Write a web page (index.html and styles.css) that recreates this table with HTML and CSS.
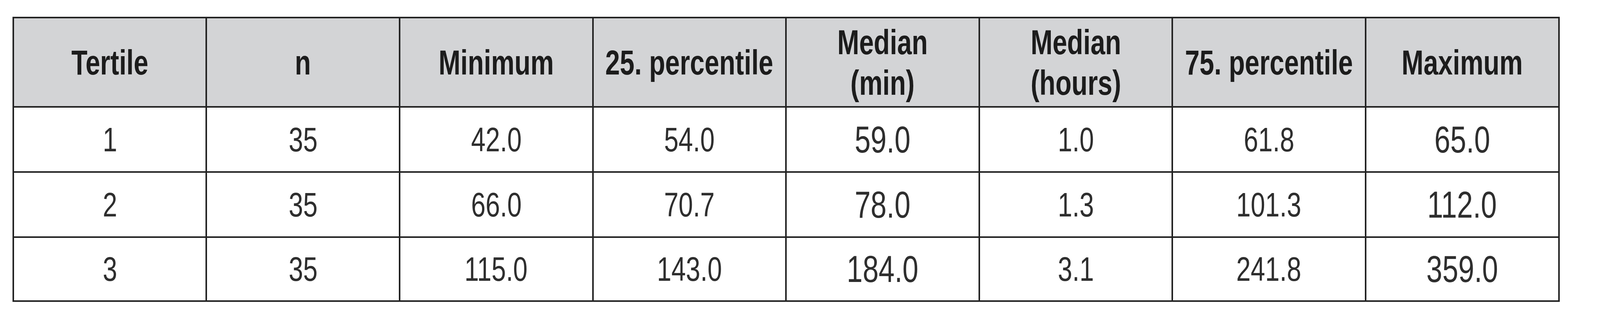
FILE: index.html
```html
<!DOCTYPE html>
<html>
<head>
<meta charset="utf-8">
<link rel="stylesheet" href="styles.css">
</head>
<body>
<div class="page">
<table class="stats">
<thead>
<tr class="head-row">
<th><div class="c"><span class="t">Tertile</span></div></th>
<th><div class="c"><span class="t">n</span></div></th>
<th><div class="c"><span class="t">Minimum</span></div></th>
<th><div class="c"><span class="t">25. percentile</span></div></th>
<th><div class="c"><span class="t">Median<br>(min)</span></div></th>
<th><div class="c"><span class="t">Median<br>(hours)</span></div></th>
<th><div class="c"><span class="t">75. percentile</span></div></th>
<th><div class="c"><span class="t">Maximum</span></div></th>
</tr>
</thead>
<tbody>
<tr class="row">
<td><div class="c"><span class="t">1</span></div></td>
<td><div class="c"><span class="t">35</span></div></td>
<td><div class="c"><span class="t">42.0</span></div></td>
<td><div class="c"><span class="t">54.0</span></div></td>
<td class="big"><div class="c"><span class="t">59.0</span></div></td>
<td><div class="c"><span class="t">1.0</span></div></td>
<td><div class="c"><span class="t">61.8</span></div></td>
<td class="big"><div class="c"><span class="t">65.0</span></div></td>
</tr>
<tr class="row">
<td><div class="c"><span class="t">2</span></div></td>
<td><div class="c"><span class="t">35</span></div></td>
<td><div class="c"><span class="t">66.0</span></div></td>
<td><div class="c"><span class="t">70.7</span></div></td>
<td class="big"><div class="c"><span class="t">78.0</span></div></td>
<td><div class="c"><span class="t">1.3</span></div></td>
<td><div class="c"><span class="t">101.3</span></div></td>
<td class="big"><div class="c"><span class="t">112.0</span></div></td>
</tr>
<tr class="row last">
<td><div class="c"><span class="t">3</span></div></td>
<td><div class="c"><span class="t">35</span></div></td>
<td><div class="c"><span class="t">115.0</span></div></td>
<td><div class="c"><span class="t">143.0</span></div></td>
<td class="big"><div class="c"><span class="t">184.0</span></div></td>
<td><div class="c"><span class="t">3.1</span></div></td>
<td><div class="c"><span class="t">241.8</span></div></td>
<td class="big"><div class="c"><span class="t">359.0</span></div></td>
</tr>
</tbody>
</table>
</div>
</body>
</html>
```
FILE: styles.css
```css
html, body {
  margin: 0;
  padding: 0;
  background: #ffffff;
}
.page {
  padding: 43px 0 0 0.775vw;
}
.stats {
  border-collapse: collapse;
  table-layout: fixed;
  width: 96.7vw;
  font-family: "Liberation Sans", Arial, sans-serif;
  border: 4px solid #222222;
}
.stats th,
.stats td {
  border: 4px solid #222222;
  text-align: center;
  vertical-align: middle;
  padding: 0;
  overflow: visible;
}
.c {
  display: flex;
  justify-content: center;
  align-items: center;
}
.t {
  display: inline-block;
  white-space: nowrap;
  text-align: center;
  flex: none;
}
.stats th {
  background: #d3d4d6;
  color: #1c1c1c;
  font-weight: bold;
  font-size: 89px;
  line-height: 104px;
}
.head-row {
  height: 229px;
}
.row {
  height: 167px;
}
.row.last {
  height: 164px;
}
.stats td {
  color: #2e2e2e;
  font-size: 88px;
  line-height: 100px;
}
.stats td.big {
  font-size: 97px;
}
@media (max-width: 5300px) {
  .t {
    transform: scaleX(0.756);
  }
}
```
